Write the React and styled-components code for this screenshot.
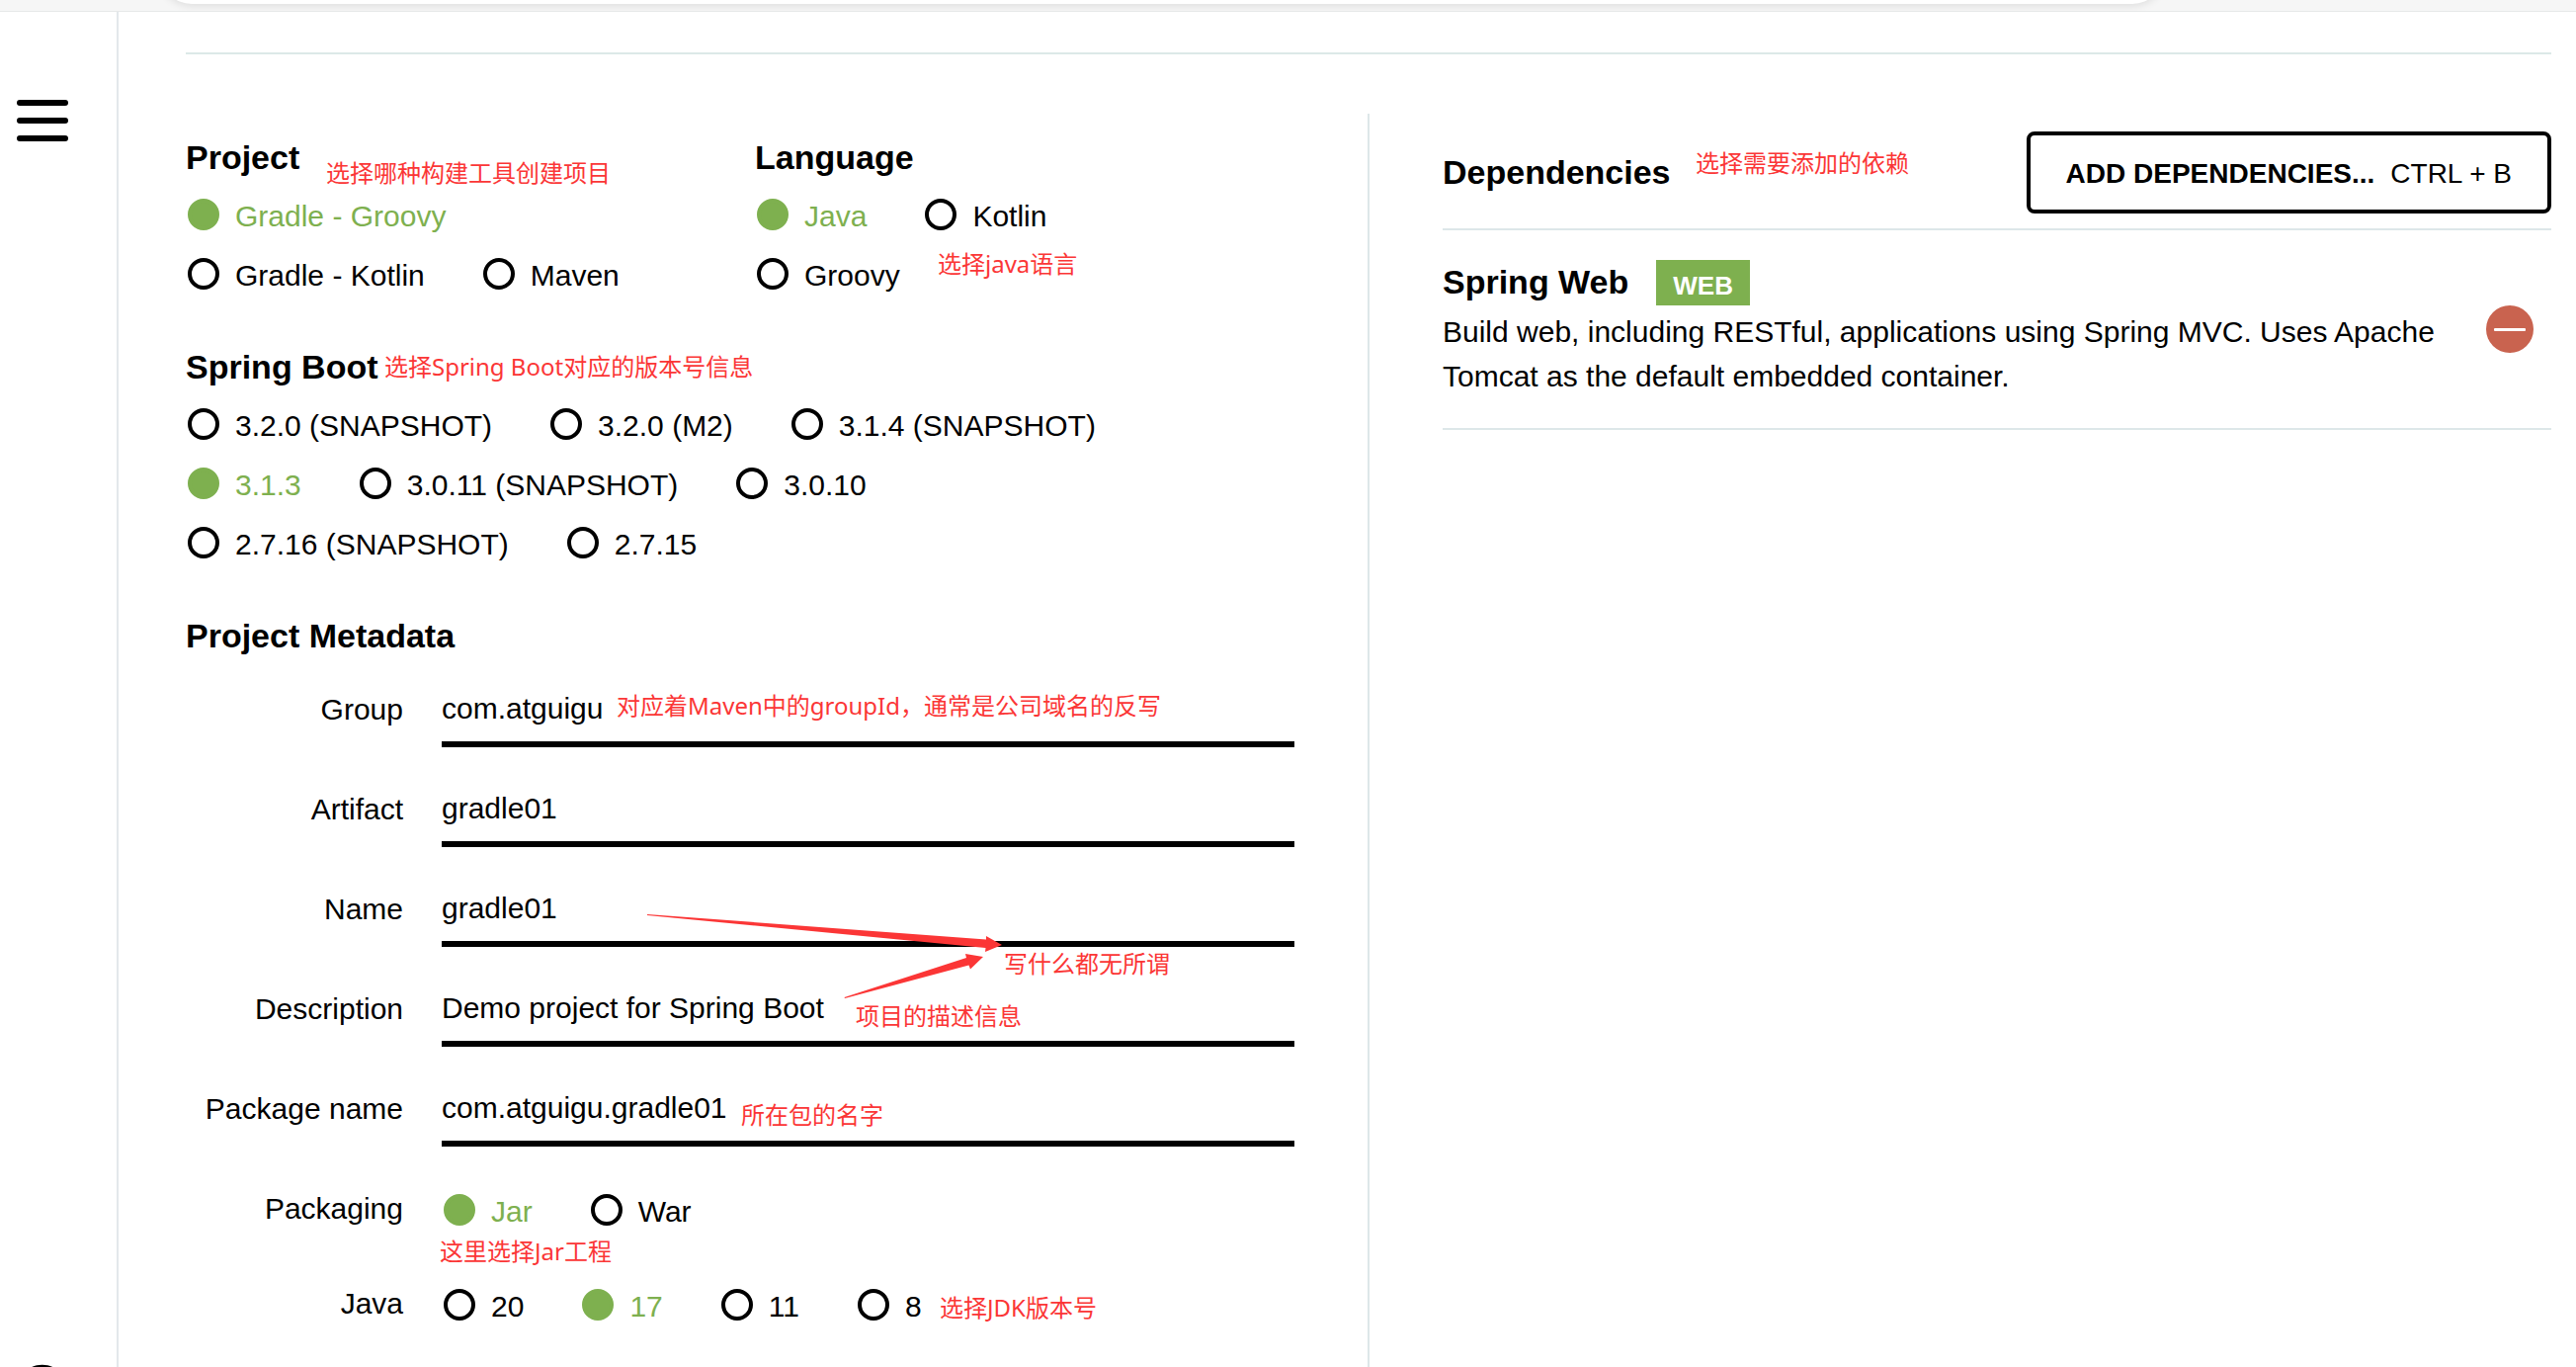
import React from "react";
import styled, { createGlobalStyle } from "styled-components";
import { FaGithub } from "react-icons/fa";

const GREEN = "#7eb04f";
const LINE = "#dde7e9";
const NOTE = "#fb3636";

const GlobalStyle = createGlobalStyle`
  *, *::before, *::after { box-sizing: border-box; }
  body {
    margin: 0;
    background: #fff;
    color: #000;
    font-family: "Liberation Sans", Arial, "Noto Sans CJK SC", sans-serif;
    font-size: 30px;
  }
  button, input { font: inherit; color: inherit; }
`;

const Page = styled.div`
  display: flex;
  flex-direction: column;
  min-height: 100vh;
  overflow: hidden;
`;

const BrowserStrip = styled.div`
  display: flex;
  align-items: flex-start;
  height: 12px;
  padding: 0 417px 0 162px;
  overflow: hidden;
  background: #f6f6f6;
  border-bottom: 1px solid #e6e8e8;
`;

const AddressBar = styled.div`
  flex: 1;
  height: 64px;
  margin-top: -60px;
  border-radius: 32px;
  background: #fff;
  box-shadow: 0 2px 8px rgba(0, 0, 0, 0.1);
`;

const Shell = styled.div`
  display: flex;
  flex: 1;
`;

const Sidebar = styled.nav`
  display: flex;
  flex-direction: column;
  justify-content: space-between;
  width: 120px;
  padding: 89px 17px 0;
  border-right: 2px solid #e3e8eb;
`;

const MenuButton = styled.button`
  display: flex;
  flex-direction: column;
  gap: 12px;
  width: 52px;
  padding: 0;
  border: 0;
  background: none;
`;

const MenuBar = styled.span`
  height: 6px;
  border-radius: 3px;
  background: #000;
`;

const GithubLink = styled.a`
  display: block;
  width: 52px;
  height: 52px;
  margin-bottom: -49px;
  color: #000;

  svg { display: block; }
`;

const Main = styled.main`
  display: flex;
  flex: 1;
  flex-direction: column;
  padding: 41px 25px 0 68px;
`;

const Rule = styled.hr`
  width: 100%;
  height: 2px;
  margin: 0 0 60px;
  border: 0;
  background: #dce9e8;
`;

const Columns = styled.div`
  display: grid;
  flex: 1;
  grid-template-columns: minmax(0, 1fr) 2px minmax(0, 1fr);
`;

const Divider = styled.div`
  background: ${LINE};
`;

const LeftColumn = styled.form`
  position: relative;
  display: flex;
  flex-direction: column;
  gap: 59px;
  padding: 25px 74px 0 0;
`;

const RightColumn = styled.section`
  position: relative;
  padding: 18px 0 0 74px;
`;

const Pair = styled.div`
  display: grid;
  grid-template-columns: 1fr 1fr;
  gap: 30px;
`;

const Heading = styled.h2`
  margin: 0;
  padding-bottom: 2px;
  font-size: 34px;
  line-height: 38px;
  font-weight: 700;
`;

const OptionList = styled.div`
  display: flex;
  flex-wrap: wrap;
  row-gap: 28px;
  padding-left: 2px;
  margin-top: ${(p) => (p.$spaced ? "21px" : "0")};
`;

const Option = styled.label`
  display: flex;
  gap: 16px;
  height: 32px;
  margin-right: 59px;
  line-height: 35px;
  white-space: nowrap;

  &:has(input:checked) { color: ${GREEN}; }
`;

const Radio = styled.input`
  appearance: none;
  width: 32px;
  height: 32px;
  margin: 0;
  border: 4px solid #000;
  border-radius: 50%;

  &:checked {
    border-color: ${GREEN};
    background: ${GREEN};
  }
`;

const Fields = styled.div`
  display: flex;
  flex-direction: column;
  gap: 28px;
  margin-top: 19px;
`;

const FieldRow = styled.div`
  display: grid;
  grid-template-columns: 220px minmax(0, 1fr);
  column-gap: 39px;
`;

const FieldLabel = styled.label`
  line-height: 69px;
  text-align: right;
`;

const TextInput = styled.input`
  width: 100%;
  height: 73px;
  padding: 0;
  border: 0;
  border-bottom: 6px solid #000;
  border-radius: 0;
  background: none;
  outline: none;
`;

const ChoiceRows = styled.div`
  display: flex;
  flex-direction: column;
  gap: 64px;
  margin-top: 48px;
`;

const ChoiceLabel = styled.span`
  line-height: 29px;
  text-align: right;
`;

const DependencyHeader = styled.header`
  display: flex;
  align-items: center;
  justify-content: space-between;
  padding-bottom: 15px;
  border-bottom: 2px solid ${LINE};
`;

const AddButton = styled.button`
  display: flex;
  align-items: center;
  gap: 16px;
  height: 83px;
  padding: 2px 36px 0;
  border: 4px solid #000;
  border-radius: 8px;
  background: #fff;
  font-size: 28px;
  white-space: nowrap;
`;

const DependencyItem = styled.article`
  display: flex;
  align-items: center;
  justify-content: space-between;
  gap: 50px;
  height: 202px;
  padding-right: 18px;
  border-bottom: 2px solid ${LINE};
`;

const DependencyTitle = styled.div`
  display: flex;
  align-items: center;
  gap: 28px;
  margin-bottom: 4px;
`;

const Badge = styled.span`
  padding: 6px 17px 0;
  background: ${GREEN};
  color: #fff;
  font-size: 26px;
  line-height: 40px;
  font-weight: 700;
`;

const Description = styled.p`
  margin: 0;
  line-height: 45px;
`;

const RemoveButton = styled.button`
  display: grid;
  flex: none;
  place-items: center;
  width: 48px;
  height: 48px;
  padding: 0;
  border: 0;
  border-radius: 50%;
  background: #c9634f;
`;

const Minus = styled.span`
  width: 32px;
  height: 3px;
  border-radius: 1px;
  background: #fff;
`;

/* Red remarks written over the form, placed from the column's corner. */
const Note = styled.span`
  position: absolute;
  left: ${(p) => p.$x}px;
  top: ${(p) => p.$y}px;
  color: ${NOTE};
  font-family: "Noto Sans", "Noto Sans CJK SC", sans-serif;
  font-size: 24px;
  line-height: 34px;
  white-space: nowrap;
  pointer-events: none;
`;

const Arrows = styled.svg`
  position: absolute;
  left: 460px;
  top: 800px;
  fill: ${NOTE};
  pointer-events: none;
`;

const versions = [
  "3.2.0 (SNAPSHOT)",
  "3.2.0 (M2)",
  "3.1.4 (SNAPSHOT)",
  "3.1.3",
  "3.0.11 (SNAPSHOT)",
  "3.0.10",
  "2.7.16 (SNAPSHOT)",
  "2.7.15",
];

const fields = [
  ["group", "Group", "com.atguigu"],
  ["artifact", "Artifact", "gradle01"],
  ["name", "Name", "gradle01"],
  ["description", "Description", "Demo project for Spring Boot"],
  ["package", "Package name", "com.atguigu.gradle01"],
];

const notes = [
  [142, 43, "选择哪种构建工具创建项目"],
  [761, 135, "选择java语言"],
  [201, 239, "选择Spring Boot对应的版本号信息"],
  [436, 582, "对应着Maven中的groupId，通常是公司域名的反写"],
  [828, 843, "写什么都无所谓"],
  [678, 896, "项目的描述信息"],
  [562, 996, "所在包的名字"],
  [257, 1134, "这里选择Jar工程"],
  [763, 1191, "选择JDK版本号"],
];

function Options({ name, labelId, items, selected, spaced }) {
  return (
    <OptionList role="radiogroup" aria-labelledby={labelId} $spaced={spaced}>
      {items.map((item) => (
        <Option key={item}>
          <Radio type="radio" name={name} value={item} defaultChecked={item === selected} />
          {item}
        </Option>
      ))}
    </OptionList>
  );
}

function OptionSection({ title, name, items, selected }) {
  return (
    <section>
      <Heading id={`${name}-title`}>{title}</Heading>
      <Options name={name} labelId={`${name}-title`} items={items} selected={selected} spaced />
    </section>
  );
}

function ChoiceRow({ title, name, items, selected }) {
  return (
    <FieldRow>
      <ChoiceLabel id={`${name}-title`}>{title}</ChoiceLabel>
      <Options name={name} labelId={`${name}-title`} items={items} selected={selected} />
    </FieldRow>
  );
}

export default function App() {
  return (
    <Page>
      <GlobalStyle />
      <BrowserStrip>
        <AddressBar />
      </BrowserStrip>
      <Shell>
        <Sidebar>
          <MenuButton type="button" aria-label="Menu">
            <MenuBar />
            <MenuBar />
            <MenuBar />
          </MenuButton>
          <GithubLink href="#github" aria-label="GitHub">
            <FaGithub size={52} />
          </GithubLink>
        </Sidebar>
        <Main>
          <Rule />
          <Columns>
            <LeftColumn>
              <Pair>
                <OptionSection
                  title="Project"
                  name="project"
                  items={["Gradle - Groovy", "Gradle - Kotlin", "Maven"]}
                  selected="Gradle - Groovy"
                />
                <OptionSection
                  title="Language"
                  name="language"
                  items={["Java", "Kotlin", "Groovy"]}
                  selected="Java"
                />
              </Pair>
              <OptionSection title="Spring Boot" name="boot" items={versions} selected="3.1.3" />
              <section>
                <Heading>Project Metadata</Heading>
                <Fields>
                  {fields.map(([id, label, value]) => (
                    <FieldRow key={id}>
                      <FieldLabel htmlFor={id}>{label}</FieldLabel>
                      <TextInput id={id} type="text" defaultValue={value} />
                    </FieldRow>
                  ))}
                </Fields>
                <ChoiceRows>
                  <ChoiceRow title="Packaging" name="packaging" items={["Jar", "War"]} selected="Jar" />
                  <ChoiceRow title="Java" name="java" items={["20", "17", "11", "8"]} selected="17" />
                </ChoiceRows>
              </section>
              {notes.map(([x, y, text]) => (
                <Note key={text} $x={x} $y={y}>{text}</Note>
              ))}
              <Arrows width="380" height="110" viewBox="0 0 380 110" aria-hidden="true">
                <path d="M7 10 L350 35.5 L350 32 L366 41 L349 48 L349.500 44 L7 11 Z" />
                <path d="M206.500 94 L330 54 L329 50 L347 53 L334 65.500 L332.500 61.500 L207 95 Z" />
              </Arrows>
            </LeftColumn>
            <Divider />
            <RightColumn>
              <DependencyHeader>
                <Heading>Dependencies</Heading>
                <AddButton type="button">
                  <b>ADD DEPENDENCIES...</b>
                  <span>CTRL + B</span>
                </AddButton>
              </DependencyHeader>
              <DependencyItem>
                <div>
                  <DependencyTitle>
                    <Heading as="h3">Spring Web</Heading>
                    <Badge>WEB</Badge>
                  </DependencyTitle>
                  <Description>
                    Build web, including RESTful, applications using Spring MVC. Uses Apache
                    Tomcat as the default embedded container.
                  </Description>
                </div>
                <RemoveButton type="button" aria-label="Remove Spring Web">
                  <Minus />
                </RemoveButton>
              </DependencyItem>
              <Note $x={330} $y={33}>选择需要添加的依赖</Note>
            </RightColumn>
          </Columns>
        </Main>
      </Shell>
    </Page>
  );
}
